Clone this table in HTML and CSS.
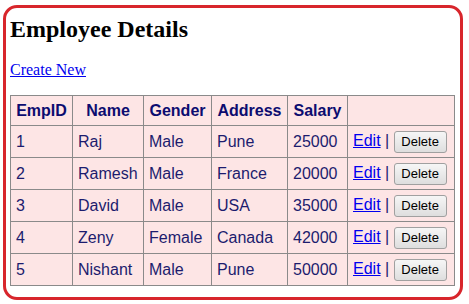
FILE: index.html
```html
<!DOCTYPE html>
<html>
<head>
<meta charset="utf-8">
<title>Employee Details</title>
<link rel="stylesheet" href="styles.css">
</head>
<body>
<div class="frame">
  <h1 class="title">Employee Details</h1>
  <p class="create"><a href="#">Create New</a></p>
  <table class="grid">
    <colgroup>
      <col class="c-id"><col class="c-name"><col class="c-gender"><col class="c-addr"><col class="c-sal"><col class="c-act">
    </colgroup>
    <thead>
      <tr><th>EmpID</th><th>Name</th><th>Gender</th><th>Address</th><th>Salary</th><th></th></tr>
    </thead>
    <tbody>
      <tr><td>1</td><td>Raj</td><td>Male</td><td>Pune</td><td>25000</td><td><a href="#">Edit</a> | <button class="del">Delete</button></td></tr>
      <tr><td>2</td><td>Ramesh</td><td>Male</td><td>France</td><td>20000</td><td><a href="#">Edit</a> | <button class="del">Delete</button></td></tr>
      <tr><td>3</td><td>David</td><td>Male</td><td>USA</td><td>35000</td><td><a href="#">Edit</a> | <button class="del">Delete</button></td></tr>
      <tr><td>4</td><td>Zeny</td><td>Female</td><td>Canada</td><td>42000</td><td><a href="#">Edit</a> | <button class="del">Delete</button></td></tr>
      <tr><td>5</td><td>Nishant</td><td>Male</td><td>Pune</td><td>50000</td><td><a href="#">Edit</a> | <button class="del">Delete</button></td></tr>
    </tbody>
  </table>
</div>
</body>
</html>
```
FILE: styles.css
```css
html, body {
  margin: 0;
  padding: 0;
  background: #ffffff;
}
body {
  font-family: "Liberation Serif", "Times New Roman", serif;
  width: 469px;
  height: 304px;
  overflow: hidden;
}
.frame {
  margin: 5px 6px 0 3px;
  border: 3px solid #d8262c;
  border-radius: 14px;
  padding: 7px 4px 0 4px;
  box-sizing: content-box;
  height: 282px;
}
.title {
  margin: 0;
  font-size: 24px;
  font-weight: bold;
  color: #000;
  line-height: 28px;
}
.create {
  margin: 18px 0 16px 0;
  font-size: 16px;
  line-height: 18px;
}
.create a {
  color: #0000ee;
}
.grid {
  border-collapse: collapse;
  table-layout: fixed;
  width: 444px;
  background: #fde5e5;
  font-family: "Liberation Sans", Arial, sans-serif;
  font-size: 16px;
  color: #1c1c6e;
}
.c-id { width: 62px; }
.c-name { width: 71px; }
.c-gender { width: 68px; }
.c-addr { width: 76px; }
.c-sal { width: 60px; }
.c-act { width: 107px; }
.grid th, .grid td {
  border: 1px solid #8a8a8a;
  padding: 0 5px;
  white-space: nowrap;
}
.grid th {
  height: 29px;
  font-weight: bold;
  color: #0c0c70;
  text-align: center;
}
.grid td {
  height: 31px;
  text-align: left;
}
.grid td a {
  color: #0000ee;
}
.del {
  font-family: "Liberation Sans", Arial, sans-serif;
  font-size: 13px;
  color: #000;
  width: 53px;
  height: 22px;
  padding: 0;
  margin: 0;
  border: 1px solid #a0a0a0;
  border-radius: 3px;
  background: linear-gradient(#f6f6f6, #dedede);
  vertical-align: middle;
}
```
